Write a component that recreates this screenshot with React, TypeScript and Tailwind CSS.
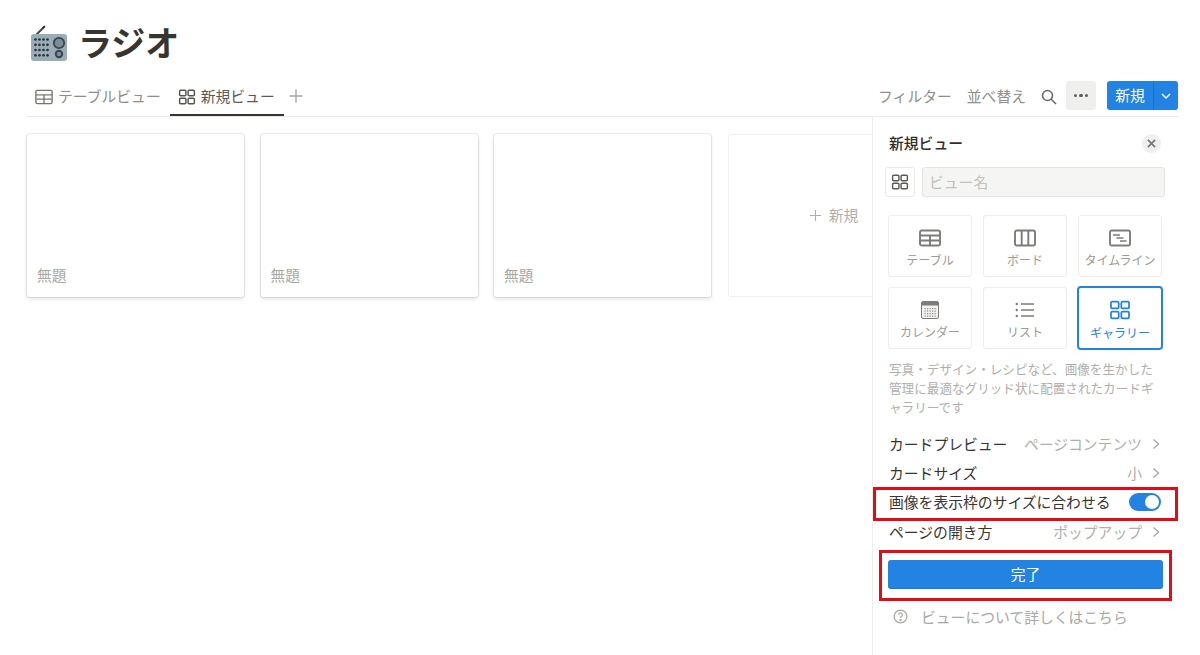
import React from "react";

const Gallery = ({ className = "" }: { className?: string }) => (
  <svg viewBox="0 0 20 20" fill="none" stroke="currentColor" strokeWidth="1.6" className={className}>
    <rect x="1.8" y="2.4" width="7" height="6.2" rx="1.2" />
    <rect x="11.2" y="2.4" width="7" height="6.2" rx="1.2" />
    <rect x="1.8" y="11.4" width="7" height="6.2" rx="1.2" />
    <rect x="11.2" y="11.4" width="7" height="6.2" rx="1.2" />
  </svg>
);

const TableTab = ({ className = "" }: { className?: string }) => (
  <svg viewBox="0 0 20 20" fill="none" stroke="currentColor" strokeWidth="1.5" className={className}>
    <rect x="1" y="2.6" width="18" height="14.8" rx="1.5" />
    <path d="M1 7.6h18M1 12.4h18M10 7.6v9.8" />
  </svg>
);

const TableTile = () => (
  <svg viewBox="0 0 22 18" fill="none" stroke="#7d7c78" strokeWidth="1.9" className="h-[18px] w-[22px]">
    <rect x="1" y="1.5" width="20" height="15" rx="1.8" />
    <path d="M1 6.5h20M1 11.5h20M11 6.5v10" />
  </svg>
);

const BoardTile = () => (
  <svg viewBox="0 0 22 18" fill="none" stroke="#7d7c78" strokeWidth="1.9" className="h-[18px] w-[22px]">
    <rect x="1" y="1.5" width="20" height="15" rx="1.8" />
    <path d="M7.7 1.5v15M14.3 1.5v15" />
  </svg>
);

const TimelineTile = () => (
  <svg viewBox="0 0 22 18" fill="none" stroke="#7d7c78" className="h-[18px] w-[22px]">
    <rect x="1" y="1.5" width="20" height="15" rx="1.8" strokeWidth="1.9" />
    <path d="M4 6h7M7.5 9h7M11 12h6.5" strokeWidth="1.3" />
  </svg>
);

const CalendarTile = () => (
  <svg viewBox="0 0 18 18" className="h-[18px] w-[18px]">
    <rect x="0.5" y="0.5" width="17" height="17" rx="1.6" fill="#f2f1ef" stroke="#7d7c78" />
    <path d="M0.5 2a1.5 1.5 0 0 1 1.5-1.5h14A1.5 1.5 0 0 1 17.5 2v2.5h-17z" fill="#7d7c78" />
    {[7, 9.5, 12, 14.5].map((y) =>
      [3.5, 6, 8.5, 11, 13.5].map((x) => <rect key={`${x}-${y}`} x={x} y={y} width="1.2" height="1.2" fill="#8f8e8a" />)
    )}
  </svg>
);

const ListTile = () => (
  <svg viewBox="0 0 20 16" fill="none" stroke="#7d7c78" className="h-4 w-5">
    <path d="M6 2h13M6 8h13M6 14h13" strokeWidth="1.6" />
    <circle cx="1.8" cy="2" r="1.2" fill="#7d7c78" stroke="none" />
    <circle cx="1.8" cy="8" r="1.2" fill="#7d7c78" stroke="none" />
    <circle cx="1.8" cy="14" r="1.2" fill="#7d7c78" stroke="none" />
  </svg>
);

const Radio = () => (
  <svg viewBox="0 0 38 38" className="h-[38px] w-[38px]">
    <path d="M6.5 10.5 L14.5 2.5" stroke="#3f4a52" strokeWidth="2" />
    <path d="M12.5 4.4 L15 2" stroke="#22272b" strokeWidth="1.2" />
    <rect x="1" y="10" width="36" height="27" rx="3" fill="#9aacb8" />
    {[15.5, 20.8, 26, 31.3].map((y) =>
      [5.5, 9.5, 13.5, 17.5].map((x) => <circle key={`${x}-${y}`} cx={x} cy={y} r="1.35" fill="#2b3238" />)
    )}
    <circle cx="29" cy="19" r="5.2" fill="#7d8d98" stroke="#3a444b" strokeWidth="1.8" />
    <circle cx="29" cy="30" r="3.2" fill="#7d8d98" stroke="#3a444b" strokeWidth="2" />
  </svg>
);

const Chevron = () => (
  <svg viewBox="0 0 8 12" fill="none" stroke="#a9a8a5" strokeWidth="1.4" className="ml-[10px] h-3 w-2 shrink-0">
    <path d="M1.5 1.5 6.5 6l-5 4.5" />
  </svg>
);

const Card = () => (
  <div className="flex h-[163px] w-[217px] shrink-0 flex-col justify-end rounded-[3px] bg-white pb-[12px] pl-[10px] text-[14.7px] leading-5 text-[#a8a7a4] shadow-[0_0_0_1px_rgba(15,15,15,0.08),0_2px_4px_rgba(15,15,15,0.12)]">
    無題
  </div>
);

const tiles = [
  { label: "テーブル", icon: <TableTile /> },
  { label: "ボード", icon: <BoardTile /> },
  { label: "タイムライン", icon: <TimelineTile /> },
  { label: "カレンダー", icon: <CalendarTile /> },
  { label: "リスト", icon: <ListTile /> },
  { label: "ギャラリー", icon: <Gallery className="h-[22px] w-[22px]" />, active: true },
];

const Row = ({ label, value }: { label: string; value: string }) => (
  <div className="flex h-[29.4px] items-center justify-between pr-[18px] pl-[16px]">
    <span className="text-[#37352f]">{label}</span>
    <span className="flex items-center text-[#b0afac]">
      {value}
      <Chevron />
    </span>
  </div>
);

export default function App() {
  return (
    <div
      className="flex h-[655px] w-full flex-col overflow-hidden bg-white pr-[22px] pl-[27px] text-[14.8px]"
      style={{ fontFamily: '"Noto Sans CJK JP", "Liberation Sans", sans-serif' }}
    >
      <header className="flex h-[81px] items-start pt-6 pl-[3px]">
        <Radio />
        <h1 className="ml-[10px] -translate-y-px text-[34px] leading-[38px] font-bold text-[#37352f]">ラジオ</h1>
      </header>

      <div className="flex h-9 shrink-0 items-stretch border-b border-[#e9e9e7]">
        <div className="flex items-center pb-[4px] pl-[8px] text-[#8f8e8a]">
          <TableTab className="mr-[5px] h-[18px] w-[18px] text-[#77766f]" />
          テーブルビュー
        </div>
        <div className="relative ml-[9px] flex items-center border-b-2 border-[#37352f] pr-[9px] pb-[2px] pl-[8px] text-[#5b5a55]">
          <Gallery className="mr-[5px] h-[18px] w-[18px] text-[#55544f]" />
          新規ビュー
        </div>
        <svg viewBox="0 0 16 16" fill="none" stroke="#a3a29e" strokeWidth="1.3" className="mt-[7px] ml-[4px] h-4 w-4">
          <path d="M8 1.5v13M1.5 8h13" />
        </svg>
        <div className="ml-auto flex items-center gap-[15px] pb-[4px] text-[#8f8e8a]">
          <span>フィルター</span>
          <span>並べ替え</span>
          <svg viewBox="0 0 16 16" fill="none" stroke="#6e6d69" strokeWidth="1.6" className="h-4 w-4">
            <circle cx="6.5" cy="6.5" r="5" />
            <path d="m10 10 5 5" />
          </svg>
        </div>
        <div className="mt-0 mb-[6px] ml-[9px] flex h-[29px] w-[30px] items-center justify-center gap-[2px] rounded-[3px] bg-[#efefee]">
          <span className="h-[3.5px] w-[3.5px] rounded-full bg-[#5f5e5a]" />
          <span className="h-[3.5px] w-[3.5px] rounded-full bg-[#5f5e5a]" />
          <span className="h-[3.5px] w-[3.5px] rounded-full bg-[#5f5e5a]" />
        </div>
        <div className="ml-[11px] flex h-[29px] w-[71px] rounded-[3px] bg-[#2383e2] text-white">
          <span className="flex w-[47px] items-center justify-center border-r border-[#1b6fc4]">新規</span>
          <span className="flex flex-1 items-center justify-center">
            <svg viewBox="0 0 10 6" fill="none" stroke="white" strokeWidth="1.4" className="h-[6px] w-[10px]">
              <path d="M1 1l4 4 4-4" />
            </svg>
          </span>
        </div>
      </div>

      <div className="flex min-h-0 flex-1">
        <div className="-ml-[4px] flex min-w-0 flex-1 gap-[16.5px] overflow-hidden pt-[17px] pl-[4px]">
          <Card />
          <Card />
          <Card />
          <div className="flex h-[163px] w-[217px] shrink-0 items-center justify-center rounded-[3px] border border-[#efefed] pr-[5px] text-[#b0afac]">
            <svg viewBox="0 0 14 14" fill="none" stroke="#b0afac" strokeWidth="1.2" className="mr-[7px] h-[13px] w-[13px]">
              <path d="M7 1v12M1 7h12" />
            </svg>
            新規
          </div>
        </div>

        <aside className="relative w-[306px] shrink-0 border-l border-[#ededeb] pt-[16px]">
          <div className="flex h-5 items-center justify-between pr-[17px] pl-[16px]">
            <span className="font-medium text-[#2f2e2a]">新規ビュー</span>
            <span className="flex h-[19px] w-[19px] items-center justify-center rounded-full bg-[#efefee]">
              <svg viewBox="0 0 10 10" fill="none" stroke="#77766f" strokeWidth="1.8" className="h-[9px] w-[9px]">
                <path d="M1 1l8 8M9 1 1 9" />
              </svg>
            </span>
          </div>
          <div className="mt-[14px] flex gap-[7px] pr-[13px] pl-[12px]">
            <span className="flex h-[30px] w-[30px] items-center justify-center rounded-[3px] border border-[#e9e9e7] text-[#5b5a55]">
              <Gallery className="h-[18px] w-[18px]" />
            </span>
            <div className="flex h-[30px] flex-1 items-center rounded-[3px] border border-[#e3e3e1] bg-[#f5f5f4] pl-[6px] text-[#c2c1be]">
              ビュー名
            </div>
          </div>
          <div className="mt-[18px] grid grid-cols-3 gap-x-[11px] gap-y-[10px] pr-[16px] pl-[15px]">
            {tiles.map((t) => (
              <div
                key={t.label}
                className={
                  t.active
                    ? "-m-[1px] flex h-[64px] flex-col items-center rounded-[4px] border-2 border-[#2383e2] text-[12px] leading-[18px] text-[#2383e2]"
                    : "flex h-[62px] flex-col items-center rounded-[3px] border border-[#ededeb] text-[12px] leading-[18px] text-[#9b9a97]"
                }
              >
                <span className={t.active ? "mt-[10px] flex h-[24px] items-center" : "mt-[11px] flex h-[22px] items-center"}>{t.icon}</span>
                <span className="mt-[2px]">{t.label}</span>
              </div>
            ))}
          </div>
          <p className="mt-[10px] pr-[22px] pl-[16px] text-[12.6px] leading-[19px] text-[#b0afac]">
            写真・デザイン・レシピなど、画像を生かした管理に最適なグリッド状に配置されたカードギャラリーです
          </p>
          <div className="mt-[13px]">
            <Row label="カードプレビュー" value="ページコンテンツ" />
            <Row label="カードサイズ" value="小" />
            <div className="flex h-[29.4px] items-center justify-between pr-[17px] pl-[16px]">
              <span className="text-[#37352f]">画像を表示枠のサイズに合わせる</span>
              <span className="flex h-[18px] w-[32px] items-center justify-end rounded-full bg-[#2383e2] pr-[2px]">
                <span className="h-[14px] w-[14px] rounded-full bg-white" />
              </span>
            </div>
            <Row label="ページの開き方" value="ポップアップ" />
          </div>
          <div className="mt-[13px] mr-[15px] ml-[15px] flex h-[29px] items-center justify-center rounded-[3px] bg-[#2383e2] text-white shadow-[inset_0_-1px_0_rgba(15,15,15,0.12)]">
            完了
          </div>
          <div className="mt-[17px] flex items-center pl-[20px] text-[#a9a8a5]">
            <svg viewBox="0 0 16 16" fill="none" stroke="#a9a8a5" strokeWidth="1.3" className="mr-[13px] h-[15px] w-[15px]">
              <circle cx="8" cy="8" r="6.8" />
              <path d="M6 6.2a2 2 0 1 1 3 1.8c-.7.4-1 .8-1 1.6" />
              <circle cx="8" cy="11.8" r=".6" fill="#a9a8a5" />
            </svg>
            ビューについて詳しくはこちら
          </div>
          <div className="pointer-events-none absolute top-[370px] left-0 h-[34px] w-[305px] border-[3px] border-[#e60a14]" />
          <div className="pointer-events-none absolute top-[433px] left-[6px] h-[51px] w-[293px] border-[3px] border-[#e60a14]" />
        </aside>
      </div>
    </div>
  );
}
